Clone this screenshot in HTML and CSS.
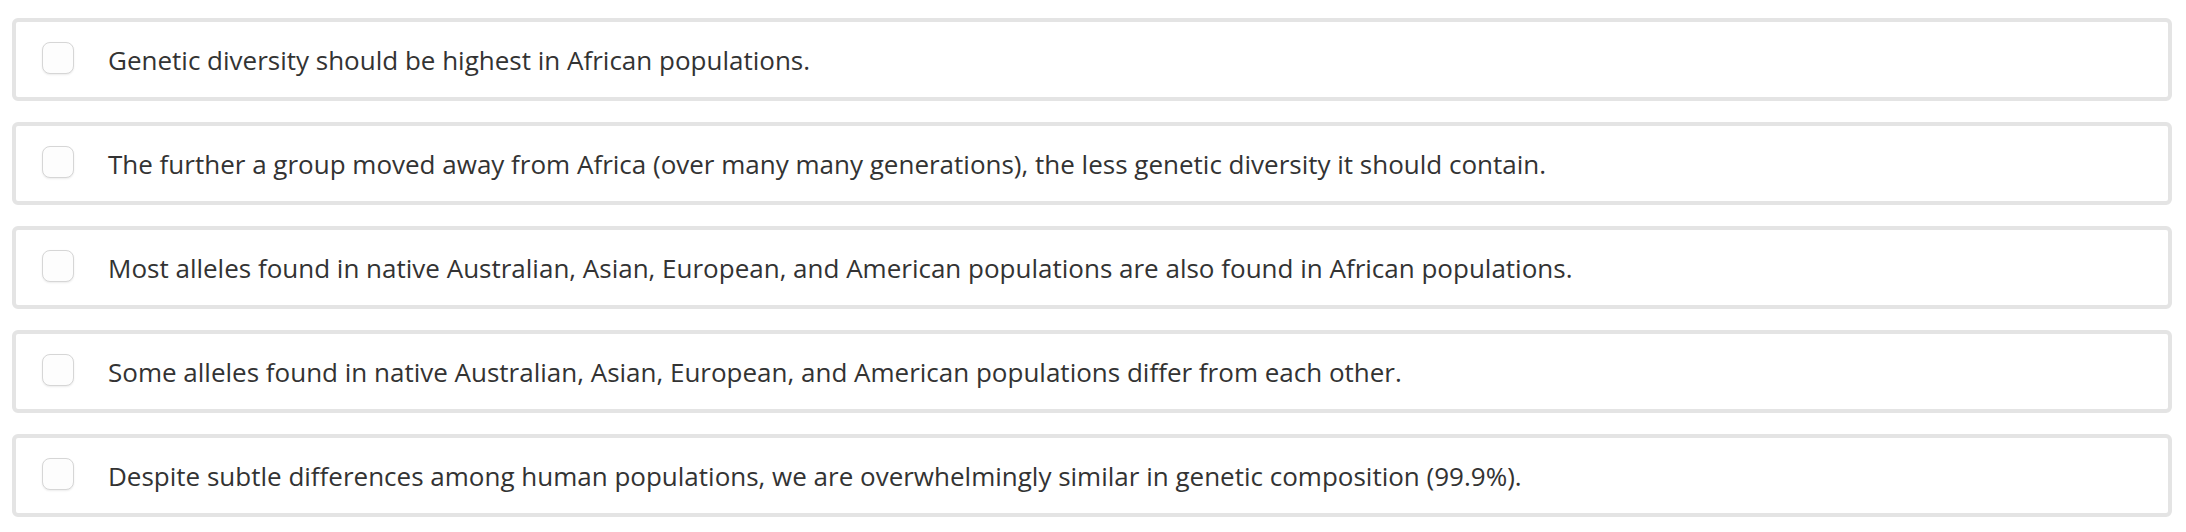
FILE: index.html
```html
<!DOCTYPE html>
<html>
<head>
<meta charset="utf-8">
<link rel="stylesheet" href="styles.css">
</head>
<body>
<div class="list">
  <label class="option"><span class="box"></span><span class="text">Genetic diversity should be highest in African populations.</span></label>
  <label class="option"><span class="box"></span><span class="text">The further a group moved away from Africa (over many many generations), the less genetic diversity it should contain.</span></label>
  <label class="option"><span class="box"></span><span class="text">Most alleles found in native Australian, Asian, European, and American populations are also found in African populations.</span></label>
  <label class="option"><span class="box"></span><span class="text">Some alleles found in native Australian, Asian, European, and American populations differ from each other.</span></label>
  <label class="option"><span class="box"></span><span class="text">Despite subtle differences among human populations, we are overwhelmingly similar in genetic composition (99.9%).</span></label>
</div>
</body>
</html>
```

FILE: styles.css
```css
html, body {
  margin: 0;
  padding: 0;
  background: #ffffff;
}
.list {
  display: flex;
  flex-direction: column;
  gap: 21px;
  padding: 18px 14px 0 12px;
  width: 2160px;
}
.option {
  display: flex;
  align-items: center;
  height: 83px;
  box-sizing: border-box;
  border: 4px solid #e4e4e4;
  border-radius: 6px;
  padding: 0 0 4px 26px;
  background: #fff;
}
.box {
  flex: none;
  width: 30px;
  height: 30px;
  border: 1px solid #d6d6d6;
  border-radius: 8px;
  background: #fdfdfd;
  box-shadow: 0 1px 2px rgba(0,0,0,0.08);
}
.text {
  margin-left: 34px;
  margin-top: 4px;
  font-family: "Open Sans", sans-serif;
  font-size: 26px;
  color: #333333;
  white-space: nowrap;
}
```
